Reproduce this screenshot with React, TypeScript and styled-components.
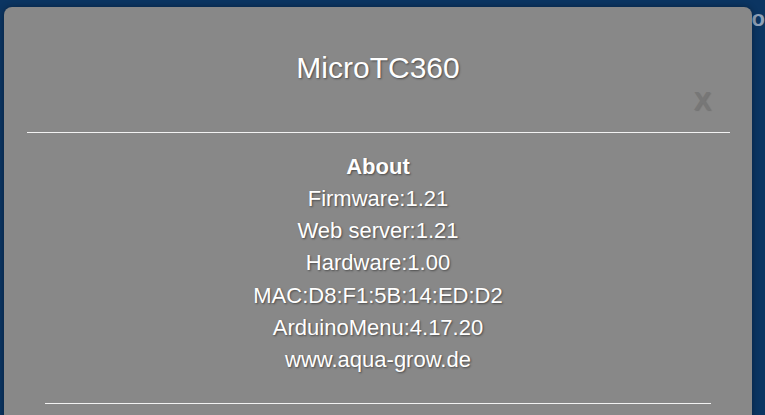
import React from 'react';
import styled, { createGlobalStyle } from 'styled-components';

const GlobalStyle = createGlobalStyle`
  html, body {
    margin: 0;
    padding: 0;
    width: 100%;
    height: 100%;
    overflow: hidden;
    background: #0b3562;
    font-family: "Liberation Sans", Arial, sans-serif;
  }
`;

const Page = styled.div`
  position: relative;
  width: 765px;
  height: 415px;
  overflow: hidden;
  background: #0b3562;
`;

const PageHeader = styled.div`
  display: flex;
  justify-content: flex-end;
  padding: 6px 0 0;
  color: #8fa1b8;
  font-size: 22px;
  font-weight: bold;
  white-space: nowrap;
`;

const Modal = styled.div`
  position: absolute;
  top: 7px;
  left: 4px;
  width: 748px;
  height: 440px;
  background: #888888;
  border-radius: 8px;
  box-shadow: 0 0 6px rgba(0, 0, 0, 0.35);
  color: #ffffff;
  text-shadow: 1px 1px 2px rgba(0, 0, 0, 0.45);
`;

const Header = styled.div`
  display: flex;
  flex-direction: column;
  padding: 44px 41px 0 23px;
`;

const Title = styled.h1`
  margin: 0;
  padding-left: 18px;
  text-align: center;
  font-size: 30px;
  font-weight: normal;
  line-height: 34.5px;
`;

const CloseRow = styled.div`
  display: flex;
  justify-content: flex-end;
  margin-top: 0;
`;

const CloseButton = styled.span`
  color: #777777;
  font-size: 26px;
  font-weight: bold;
  line-height: 30px;
  cursor: pointer;
  text-shadow: 1px 1px 1px rgba(0, 0, 0, 0.15);
`;

const Divider = styled.hr<{ $inset: [number, number] }>`
  border: none;
  height: 1px;
  background: #f2f2f2;
  margin: 0 ${(p) => p.$inset[1]}px 0 ${(p) => p.$inset[0]}px;
`;

const TopDivider = styled(Divider)`
  margin-top: 16px;
`;

const Body = styled.div`
  display: flex;
  flex-direction: column;
  align-items: center;
  padding: 18px 0 26px;
  font-size: 22px;
  line-height: 32.33px;
`;

const SectionTitle = styled.div`
  font-weight: bold;
`;

const InfoLine = styled.div``;

const info = [
  'Firmware:1.21',
  'Web server:1.21',
  'Hardware:1.00',
  'MAC:D8:F1:5B:14:ED:D2',
  'ArduinoMenu:4.17.20',
  'www.aqua-grow.de',
];

export default function App() {
  return (
    <>
      <GlobalStyle />
      <Page>
        <PageHeader>Ko</PageHeader>
        <Modal>
          <Header>
            <Title>MicroTC360</Title>
            <CloseRow>
              <CloseButton>X</CloseButton>
            </CloseRow>
          </Header>
          <TopDivider $inset={[23, 22]} />
          <Body>
            <SectionTitle>About</SectionTitle>
            {info.map((line) => (
              <InfoLine key={line}>{line}</InfoLine>
            ))}
          </Body>
          <Divider $inset={[41, 41]} />
        </Modal>
      </Page>
    </>
  );
}
